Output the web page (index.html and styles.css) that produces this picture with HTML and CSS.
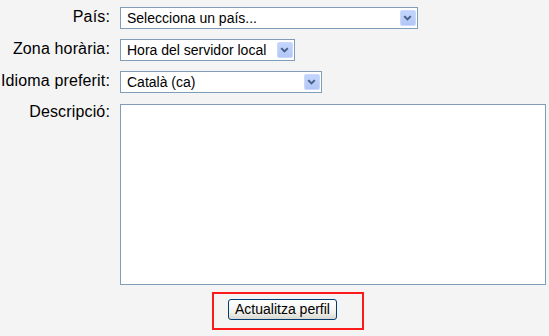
FILE: index.html
```html
<!DOCTYPE html>
<html lang="ca">
<head>
<meta charset="utf-8">
<title>Perfil</title>
<link rel="stylesheet" href="styles.css">
</head>
<body>
<form class="form">
  <div class="row">
    <label class="label">País:</label>
    <div class="select select-country">
      <span class="select-text">Selecciona un país...</span>
      <span class="select-btn"><svg width="16" height="16" viewBox="0 0 16 16"><polyline points="4.5,6 8,9.5 11.5,6" fill="none" stroke="#4a5f86" stroke-width="2.2"/></svg></span>
    </div>
  </div>
  <div class="row">
    <label class="label">Zona horària:</label>
    <div class="select select-tz">
      <span class="select-text">Hora del servidor local</span>
      <span class="select-btn"><svg width="16" height="16" viewBox="0 0 16 16"><polyline points="4.5,6 8,9.5 11.5,6" fill="none" stroke="#4a5f86" stroke-width="2.2"/></svg></span>
    </div>
  </div>
  <div class="row">
    <label class="label">Idioma preferit:</label>
    <div class="select select-lang">
      <span class="select-text">Català (ca)</span>
      <span class="select-btn"><svg width="16" height="16" viewBox="0 0 16 16"><polyline points="4.5,6 8,9.5 11.5,6" fill="none" stroke="#4a5f86" stroke-width="2.2"/></svg></span>
    </div>
  </div>
  <div class="row row-desc">
    <label class="label label-desc">Descripció:</label>
    <textarea class="textarea"></textarea>
  </div>
  <div class="actions">
    <div class="highlight">
      <button type="button" class="button">Actualitza perfil</button>
    </div>
  </div>
</form>
</body>
</html>
```

FILE: styles.css
```css
html, body {
  margin: 0;
  padding: 0;
}
body {
  background: #f4f4f4;
  font-family: "Liberation Sans", Arial, sans-serif;
  color: #000;
  width: 549px;
  height: 336px;
  overflow: hidden;
}
.form {
  display: flex;
  flex-direction: column;
  padding-top: 7px;
}
.row {
  display: grid;
  grid-template-columns: 110px auto;
  column-gap: 10px;
  align-items: start;
  margin-bottom: 10px;
}
.label {
  font-size: 16px;
  line-height: 20px;
  text-align: right;
  white-space: nowrap;
  letter-spacing: 0.15px;
}
.label-desc {
  line-height: 16px;
}
.select {
  box-sizing: border-box;
  height: 22px;
  border: 1px solid #7f9db9;
  background: #fff;
  display: flex;
  align-items: center;
  justify-content: space-between;
  padding: 0 1px 0 6px;
}
.select-country { width: 298px; }
.select-tz { width: 175px; }
.select-lang { width: 202px; }
.select-text {
  font-size: 14px;
  white-space: nowrap;
}
.select-btn {
  box-sizing: border-box;
  width: 16px;
  height: 16px;
  border: 1px solid #c9d8fb;
  border-radius: 2px;
  background: linear-gradient(#c4d5fd, #b2c7f7);
  display: flex;
  align-items: center;
  justify-content: center;
}
.select-btn svg {
  display: block;
  margin-left: -1px;
  margin-top: -1px;
}
.row-desc {
  margin-bottom: 7px;
  margin-top: 1px;
}
.textarea {
  box-sizing: border-box;
  width: 426px;
  height: 181px;
  margin: 0;
  border: 1px solid #7f9db9;
  background: #fff;
  resize: none;
  display: block;
}
.actions {
  display: flex;
  padding-left: 212px;
}
.highlight {
  box-sizing: border-box;
  width: 152px;
  height: 38px;
  border: 2px solid #ff1a1a;
  padding: 5px 0 0 14px;
}
.button {
  box-sizing: border-box;
  width: 109px;
  height: 21px;
  margin: 0;
  padding: 0;
  border: 1px solid #003c74;
  border-radius: 3px;
  background: linear-gradient(#ffffff, #f3f3ee 60%, #d9d9d2);
  font-family: "Liberation Sans", Arial, sans-serif;
  font-size: 14px;
  color: #000;
  line-height: 19px;
}
```
